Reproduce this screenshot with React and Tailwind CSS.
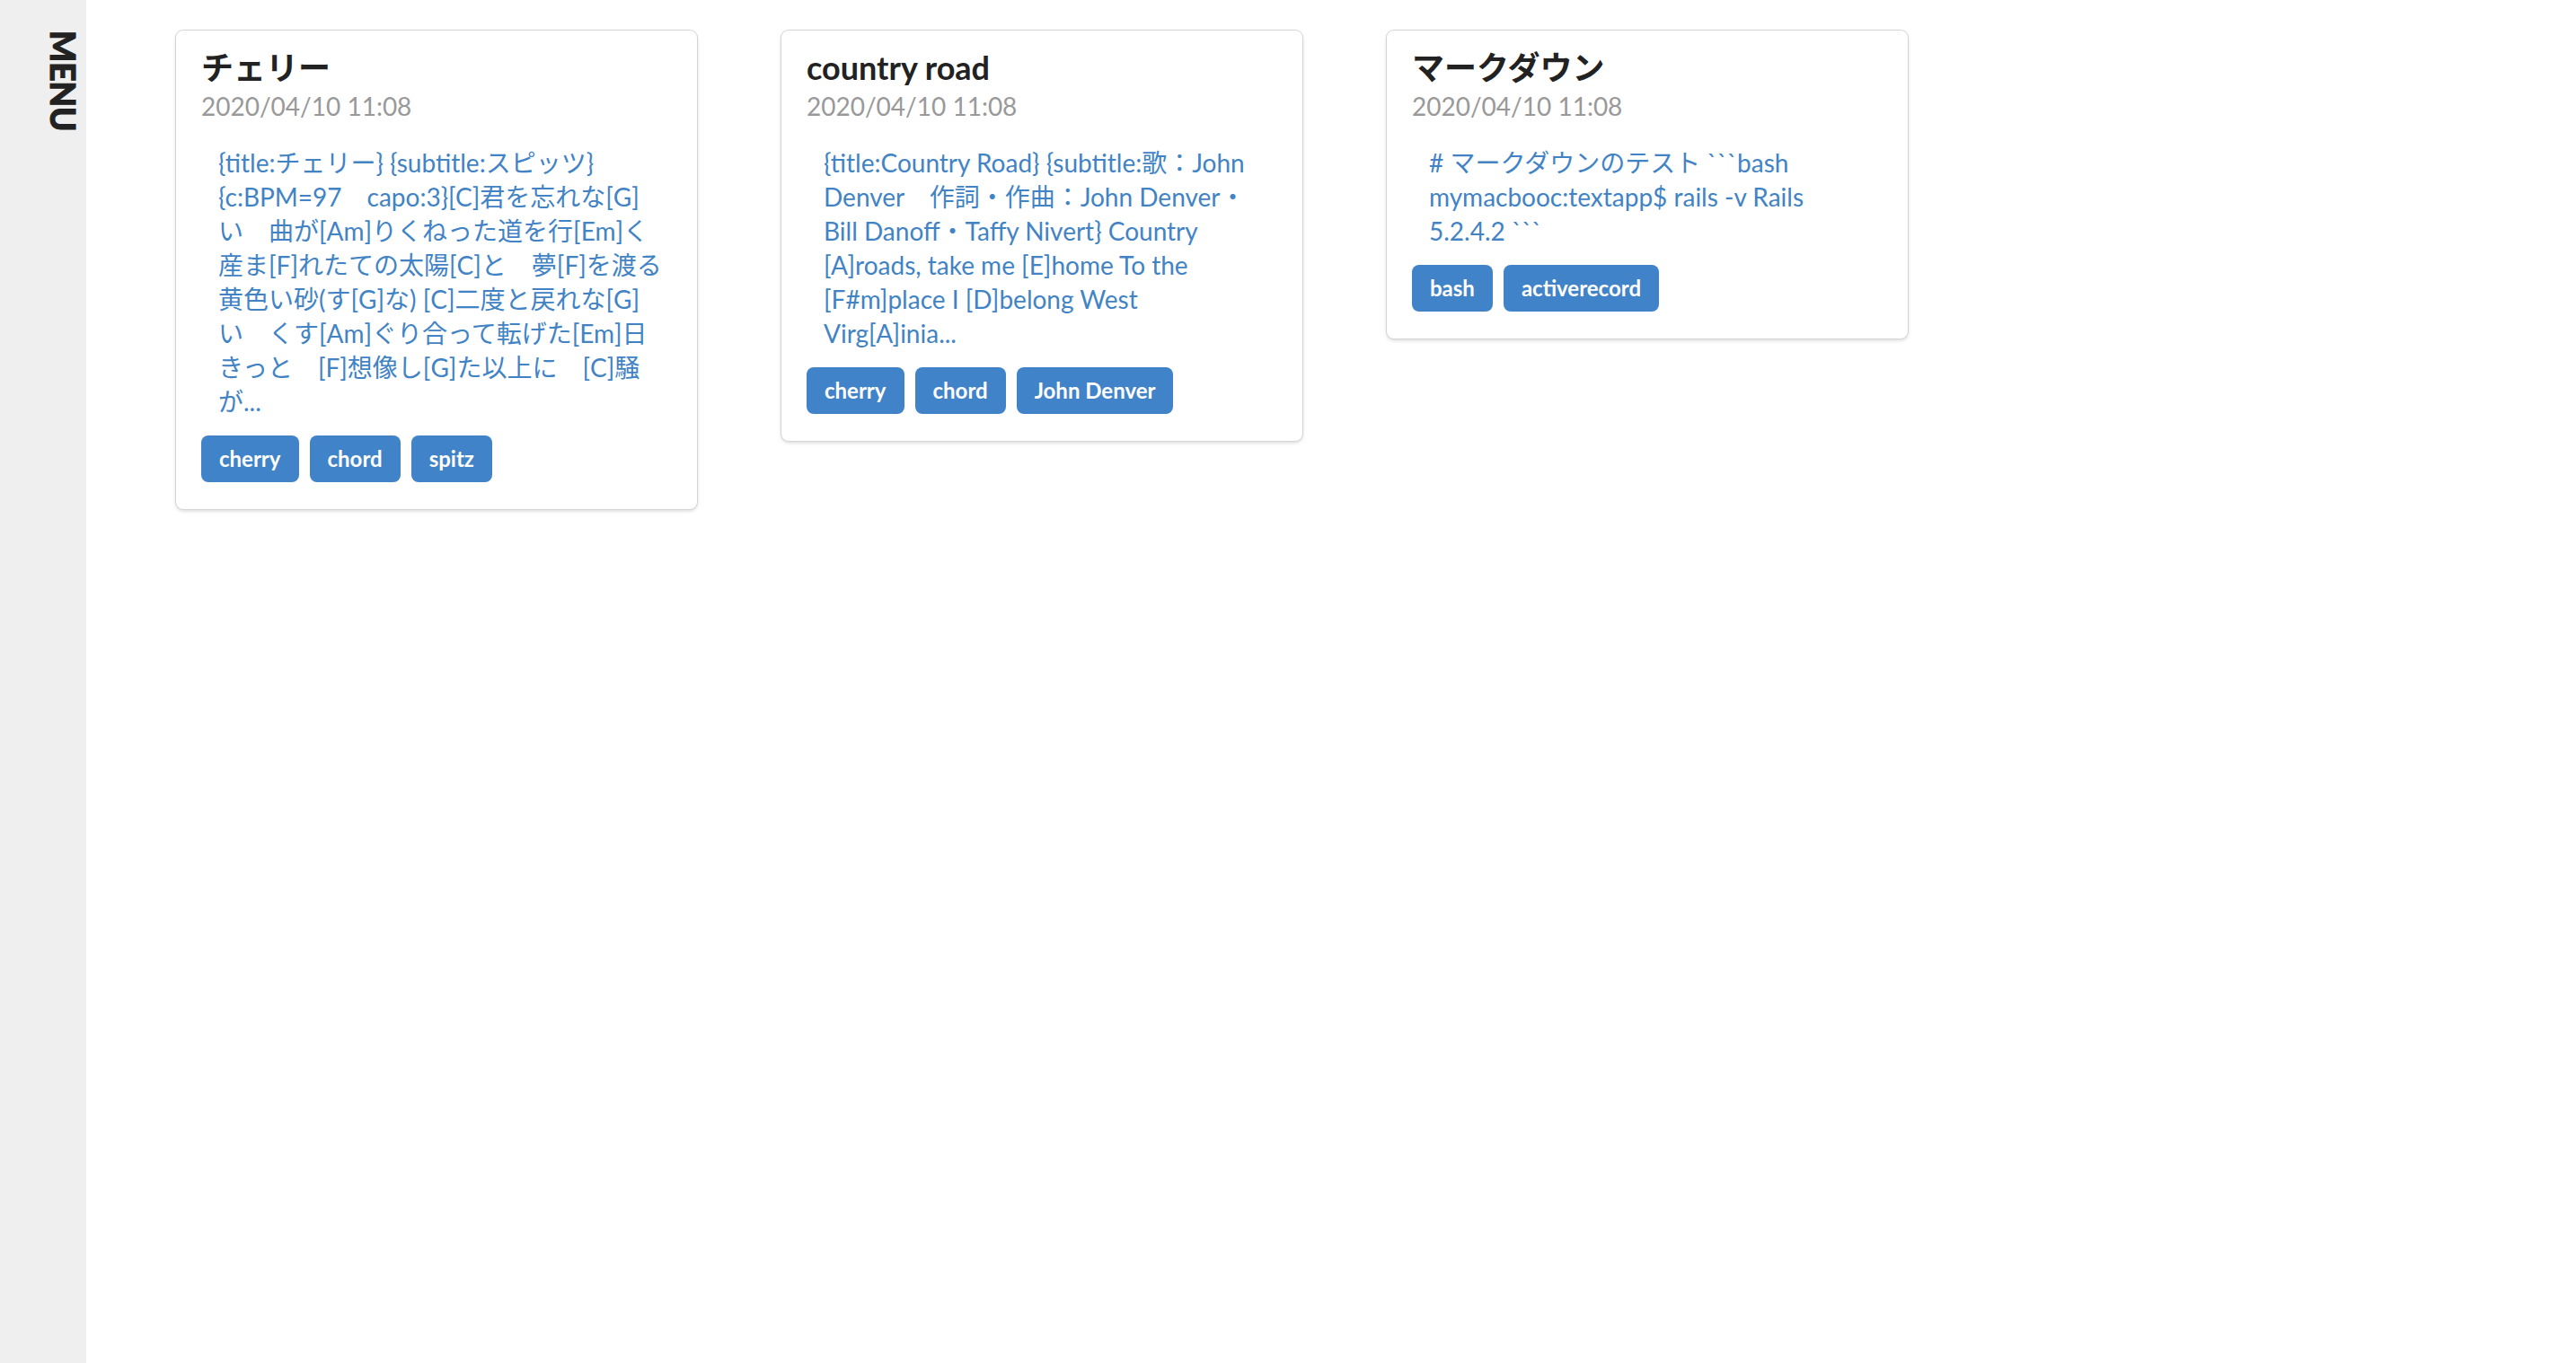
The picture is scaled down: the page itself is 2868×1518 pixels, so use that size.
const notes = [
  {
    id: 1,
    title: 'チェリー',
    date: '2020/04/10 11:08',
    lines: [
      '{title:チェリー} {subtitle:スピッツ}',
      '{c:BPM=97　capo:3}[C]君を忘れな[G]',
      'い　曲が[Am]りくねった道を行[Em]く',
      '産ま[F]れたての太陽[C]と　夢[F]を渡る',
      '黄色い砂(す[G]な) [C]二度と戻れな[G]',
      'い　くす[Am]ぐり合って転げた[Em]日',
      'きっと　[F]想像し[G]た以上に　[C]騒',
      'が...',
    ],
    tags: ['cherry', 'chord', 'spitz'],
  },
  {
    id: 2,
    title: 'country road',
    date: '2020/04/10 11:08',
    lines: [
      '{title:Country Road} {subtitle:歌：John',
      'Denver　作詞・作曲：John Denver・',
      'Bill Danoff・Taffy Nivert} Country',
      '[A]roads, take me [E]home To the',
      '[F#m]place I [D]belong West',
      'Virg[A]inia...',
    ],
    tags: ['cherry', 'chord', 'John Denver'],
  },
  {
    id: 3,
    title: 'マークダウン',
    date: '2020/04/10 11:08',
    lines: [
      '# マークダウンのテスト ```bash',
      'mymacbooc:textapp$ rails -v Rails',
      '5.2.4.2 ```',
    ],
    tags: ['bash', 'activerecord'],
  },
];

const NoteCard = ({ note }) => {
  return (
    <div className="w-[580px] flex-shrink-0 bg-white rounded-[8px] shadow-[0_0_0_1px_#d4d4d5,0_2px_4px_0_#d4d4d5] px-[28px] pt-[28px] pb-[30px]">
      {/* Header */}
      <div className="-mt-[10px] text-[36px] leading-[46px] font-bold text-[#222]">{note.title}</div>
      <div className="text-[28px] leading-[40px] text-[#999]">{note.date}</div>

      {/* Body preview */}
      <div className="mt-[24px] pl-[19px] text-[28px] text-[#4183c4]">
        {note.lines.map((line, i) => (
          <div key={i} className="h-[38px] leading-[38px] whitespace-pre">
            {line}
          </div>
        ))}
      </div>

      {/* Tags */}
      <div className="mt-[19px] flex gap-[12px]">
        {note.tags.map((tag) => (
          <span
            key={tag}
            className="bg-[#4183c8] text-white font-bold text-[24px] leading-[24px] px-[20px] py-[14px] rounded-[8px]"
          >
            {tag}
          </span>
        ))}
      </div>
    </div>
  );
};

export default function App() {
  return (
    <div
      className="flex min-h-[1518px] bg-white"
      style={{ fontFamily: 'Lato, "Noto Sans CJK JP", sans-serif' }}
    >
      {/* Side menu */}
      <div className="w-[96px] flex-shrink-0 bg-[#efefef] flex justify-end pr-[8px] pt-[34px]">
        <div className="[writing-mode:vertical-rl] text-[37px] leading-[36px] font-black text-[#222] [-webkit-text-stroke:1px_#222] h-fit">
          MENU
        </div>
      </div>

      {/* Notes */}
      <div className="flex items-start gap-[94px] pl-[100px] pt-[34px]">
        {notes.map((note) => (
          <NoteCard key={note.id} note={note} />
        ))}
      </div>
    </div>
  );
}
